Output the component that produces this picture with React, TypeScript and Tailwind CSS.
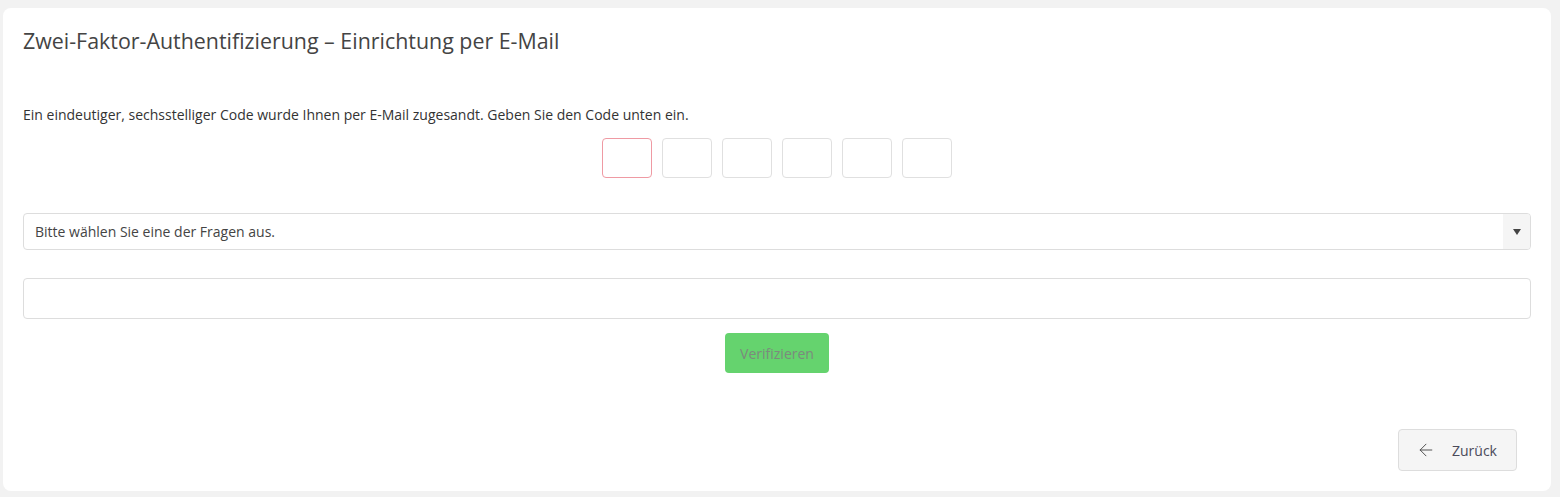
import { ArrowLeft } from "lucide-react";

const font = { fontFamily: "'Open Sans', 'Noto Sans', sans-serif" };

const CodeInputs = () => {
    const boxes = [0, 1, 2, 3, 4, 5];
    return (
        <div className="flex justify-center gap-[10px]">
            {boxes.map((i) => (
                <input
                    key={i}
                    maxLength={1}
                    className={
                        i === 0
                            ? "w-[50px] h-[40px] rounded-[4px] border border-[#ef9aa3] bg-white outline-none"
                            : "w-[50px] h-[40px] rounded-[4px] border border-[#e0e0e0] bg-white outline-none"
                    }
                />
            ))}
        </div>
    );
};

const App = () => {
    return (
        <div className="min-h-[497px] bg-[#f2f2f2] pl-[3px] pr-[9px] pt-[8px] pb-[6px]" style={font}>
            <div className="h-[483px] bg-white rounded-[8px] px-5 pt-[18px] pb-5 flex flex-col">
                <h1 className="text-[21.4px] leading-[30px] text-[#444] font-normal">
                    Zwei-Faktor-Authentifizierung – Einrichtung per E-Mail
                </h1>

                <p className="mt-[48px] text-[14px] leading-[21px] text-[#333]">
                    Ein eindeutiger, sechsstelliger Code wurde Ihnen per E-Mail zugesandt. Geben Sie den Code unten ein.
                </p>

                <div className="mt-[13px]">
                    <CodeInputs />
                </div>

                <div className="mt-[35px] h-[37px] flex items-stretch border border-[#dddddd] rounded-[4px] overflow-hidden">
                    <div className="flex-1 flex items-center pl-[11px] text-[14px] text-[#444]">
                        Bitte wählen Sie eine der Fragen aus.
                    </div>
                    <div className="w-[27px] bg-[#f5f5f5] flex items-center justify-center">
                        <svg width="8" height="6" viewBox="0 0 8 6">
                            <path d="M0 0h8L4 6z" fill="#444" />
                        </svg>
                    </div>
                </div>

                <input className="mt-[28px] h-[41px] w-full border border-[#dddddd] rounded-[4px] bg-white outline-none px-3" />

                <div className="mt-[14px] flex justify-center">
                    <button className="w-[104px] h-[40px] rounded-[4px] bg-[#65d36e] text-[14px] text-[#7c8a7d]">
                        Verifizieren
                    </button>
                </div>

                <div className="mt-auto flex justify-end pr-[14px]">
                    <button className="w-[119px] h-[42px] rounded-[4px] border border-[#dddddd] bg-[#f5f5f5] flex items-center pl-[17px] gap-[16px] text-[14px] text-[#4a4a5a]">
                        <ArrowLeft size={20} strokeWidth={1.1} className="text-[#444]" />
                        Zurück
                    </button>
                </div>
            </div>
        </div>
    );
};

export default App;
